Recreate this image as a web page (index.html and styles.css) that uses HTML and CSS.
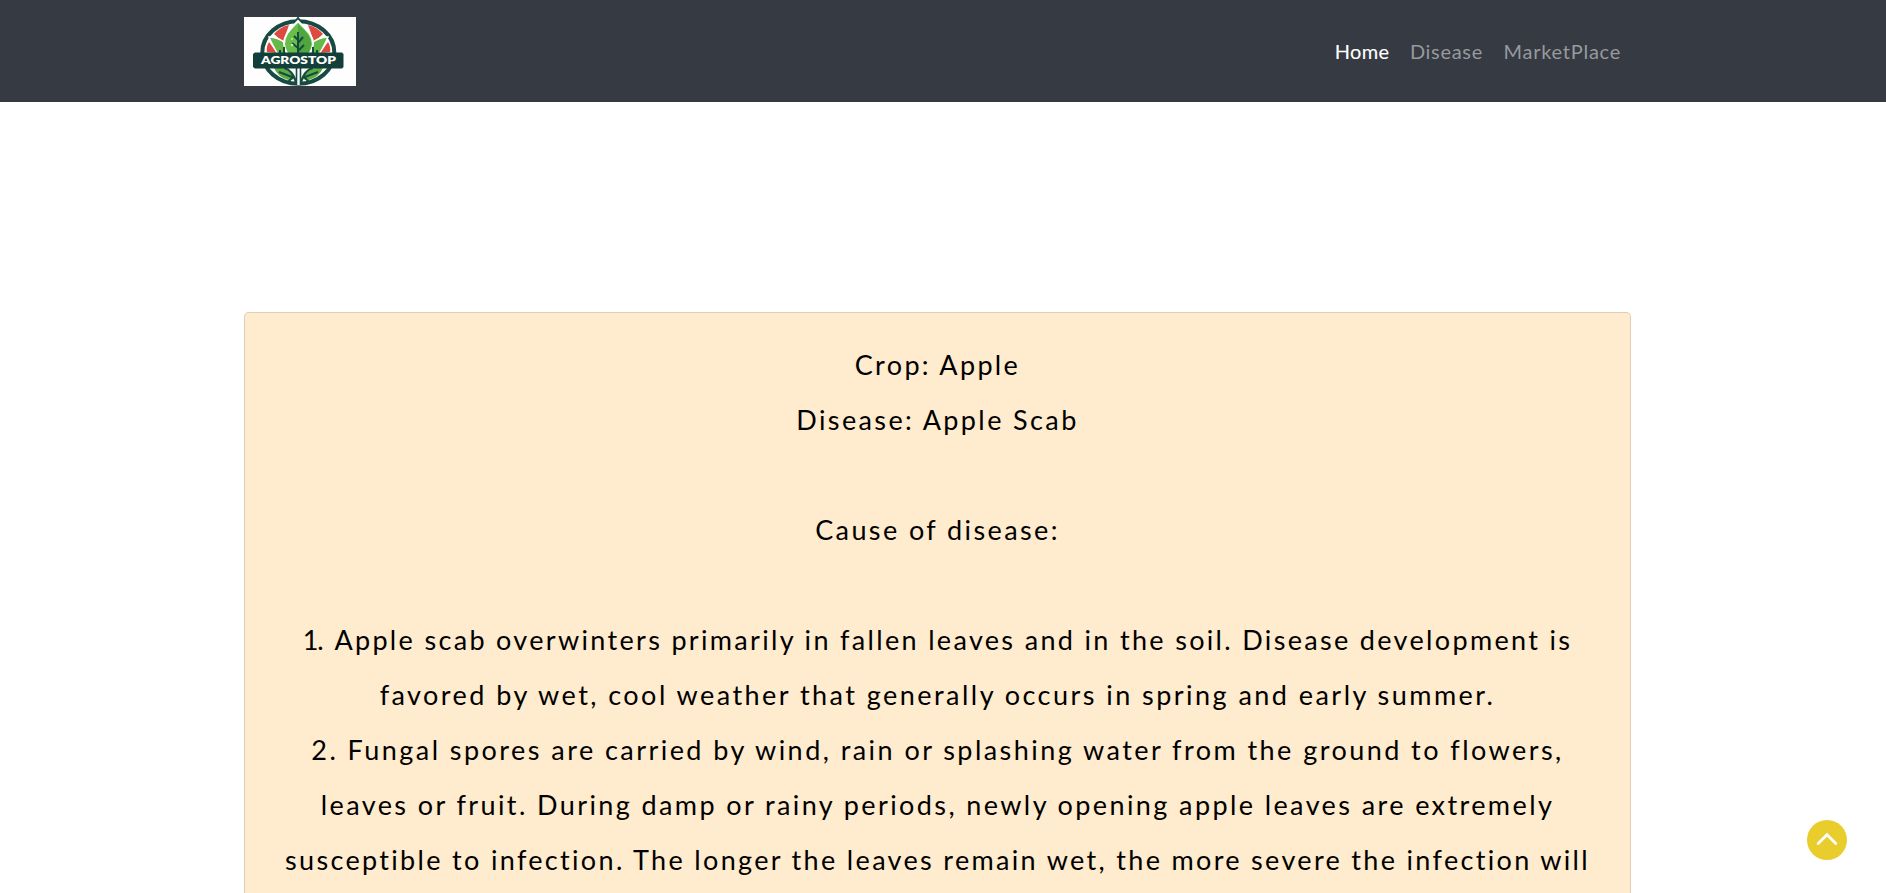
FILE: index.html
```html
<!DOCTYPE html>
<html lang="en">
<head>
<meta charset="utf-8">
<title>Agrostop</title>
<link rel="stylesheet" href="styles.css">
</head>
<body>
<header class="navbar">
  <a class="brand" aria-label="Agrostop">
    <svg width="112" height="69" viewBox="0 0 112 69">
      <rect width="112" height="69" fill="#fdfefd"/>
      <ellipse cx="54.3" cy="35.5" rx="36" ry="31.3" fill="#fff" stroke="#164a42" stroke-width="4"/>
      <path d="M30 17Q36 10 45 8L39 25Z" fill="#dd4b40"/>
      <path d="M79 17Q73 10 64 8L70 25Z" fill="#dd4b40"/>
      <path d="M23 35Q22 30 25 25L33 36ZM86 35Q87 30 84 25L76 36Z" fill="#dd4b40"/>
      <path d="M25 20Q45 21 50 42L36 40Q30 32 25 20Z" fill="#65b948" stroke="#fff" stroke-width="1.5"/>
      <path d="M84 20Q64 21 59 42L73 40Q79 32 84 20Z" fill="#65b948" stroke="#fff" stroke-width="1.5"/>
      <path d="M54 1L51 5H57Z" fill="#164a42" stroke="#164a42" stroke-width="2"/>
      <path d="M54 4C47 12 40 17 40 27Q41 36 48 42H61Q68 36 69 27C69 17 61 12 54 4Z" fill="#69be49" stroke="#fff" stroke-width="2"/>
      <path d="M54 7C61 14 67 19 67 27Q66 36 59 42H54Z" fill="#4fa63e"/>
      <path d="M54 15V42M54 23L50 19M54 26L59 20M54 31L48 26M54 34L60 28" fill="none" stroke="#174b3e" stroke-width="2"/>
      <path d="M40 37V30M36 38V33M69 37V30M73 38V33" stroke="#174b3e" stroke-width="2"/>
      <circle cx="48" cy="28" r="1.3" fill="#c5eba6"/><circle cx="48" cy="22" r=".9" fill="#c5eba6"/>
      <path d="M30 51Q48 49 52 62L44 63Q34 60 30 51ZM79 51Q61 49 57 62L65 63Q75 60 79 51Z" fill="#5aad43"/>
      <path d="M40 51Q49 53 52 66M69 51Q60 53 57 66M35 55L48 60M74 55L61 60M44 65L49 60M65 65L60 60" fill="none" stroke="#174b3e" stroke-width="2"/>
      <path d="M49 50Q53 55 53 68H56Q56 55 60 50Z" fill="#fff"/>
      <path d="M52.5 51V68M56.5 51V68" stroke="#164a42" stroke-width="1.6"/>
      <path d="M11 35.5H98L99.5 37V50L98 51.5H11L9 50V37Z" fill="#123f39"/>
      <text class="logo-text" x="17" y="46.8" textLength="75" lengthAdjust="spacingAndGlyphs">AGROSTOP</text>
    </svg>
  </a>
  <nav class="links">
    <a class="link home">Home</a>
    <a class="link disease">Disease</a>
    <a class="link market">MarketPlace</a>
  </nav>
</header>
<main class="card">
  <p class="line crop">Crop: Apple</p>
  <p class="line name">Disease: Apple Scab</p>
  <p class="line cause gap">Cause of disease:</p>
  <p class="line scab gap"><span class="number">1</span>. Apple scab overwinters primarily in fallen leaves and in the soil. Disease development is</p>
  <p class="line favored">favored by wet, cool weather that generally occurs in spring and early summer.</p>
  <p class="line spores">2. Fungal spores are carried by wind, rain or splashing water from the ground to flowers,</p>
  <p class="line leaves">leaves or fruit. During damp or rainy periods, newly opening apple leaves are extremely</p>
  <p class="line infection">susceptible to infection. The longer the leaves remain wet, the more severe the infection will</p>
</main>
<a class="to-top" aria-label="Back to top">
  <svg width="40" height="40" viewBox="0 0 40 40"><path d="M11.2 23.4L20 14.8L28.8 23.4" fill="none" stroke="#fff" stroke-width="2.8" stroke-linecap="round"/></svg>
</a>
</body>
</html>
```
FILE: styles.css
```css
* { box-sizing: border-box; }
body {
  margin: 0;
  height: 893px;
  overflow: hidden;
  background: #fff;
  font-family: Lato, sans-serif;
}
.navbar {
  height: 102px;
  padding: 0 265px 0 244px;
  display: flex;
  justify-content: space-between;
  align-items: center;
  background: #363a42;
}
.brand, .brand svg { display: block; }
.logo-text {
  font: 800 10.8px Lato, sans-serif;
  fill: #fff;
}
.links {
  display: flex;
  gap: 20.5px;
  font-size: 20px;
  line-height: 30px;
}
.link { color: #97999d; }
.home { color: #fff; letter-spacing: .3px; -webkit-text-stroke: .1px #fff; }
.disease { letter-spacing: .7px; }
.market { letter-spacing: .75px; }
.card {
  width: 1387px;
  height: 581px;
  margin: 210px 0 0 244px;
  padding: 23.5px 0 0;
  border: 1px solid #dfceb4;
  border-bottom: 0;
  border-radius: 5px 5px 0 0;
  background: #ffebcd;
  color: #000;
  font-size: 27px;
  line-height: 55px;
  text-align: center;
}
.line { margin: 0; white-space: nowrap; }
.gap { margin-top: 55px; }
.crop { letter-spacing: 2.35px; }
.name { letter-spacing: 2.4px; }
.cause { letter-spacing: 2.4px; }
.scab { letter-spacing: 2.33px; }
.number { letter-spacing: -1px; }
.favored { letter-spacing: 2.46px; }
.spores { letter-spacing: 2.45px; }
.leaves { letter-spacing: 2.4px; }
.infection { letter-spacing: 2.33px; }
.to-top {
  position: fixed;
  left: 1807px;
  top: 820px;
  width: 40px;
  height: 40px;
  border-radius: 50%;
  background: #e9cd2d;
}
.to-top svg { display: block; }
```
